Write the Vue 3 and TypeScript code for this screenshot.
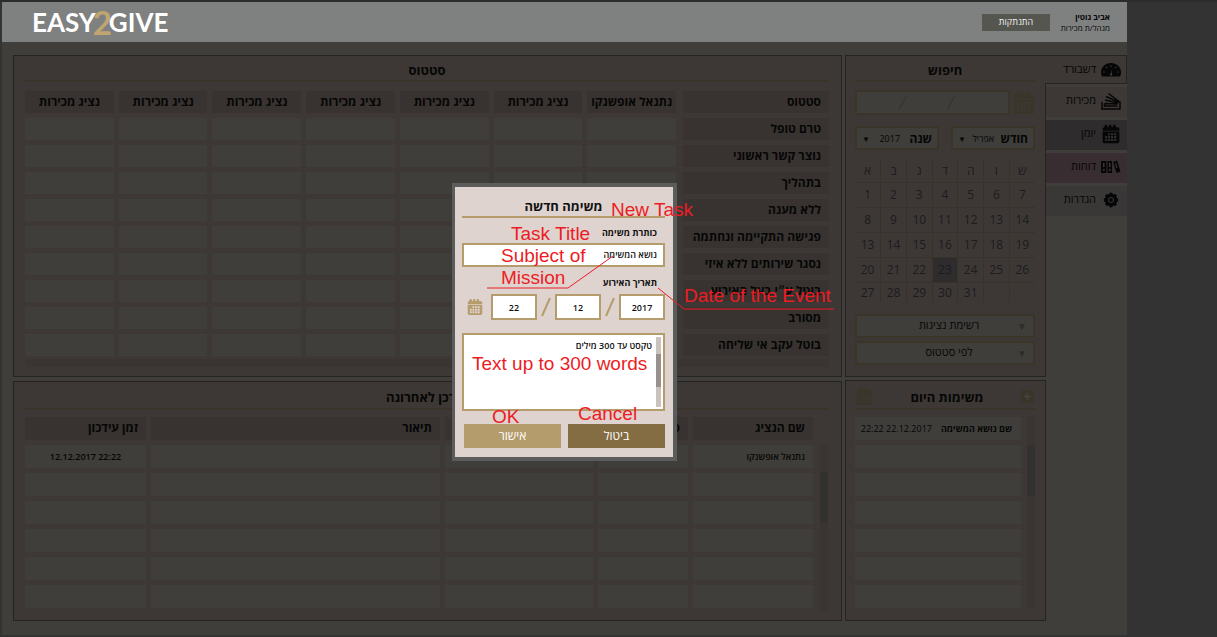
<script setup lang="ts">
import { ref } from 'vue'

const agents = ['נתנאל אופשנקו', 'נציג מכירות', 'נציג מכירות', 'נציג מכירות', 'נציג מכירות', 'נציג מכירות', 'נציג מכירות']
const statuses = [
  'טרם טופל', 'נוצר קשר ראשוני', 'בתהליך', 'ללא מענה', 'פגישה התקיימה ונחתמה',
  'נסגר שירותים ללא איזי', 'בוטל ע״י בעל האירוע', 'מסורב', 'בוטל עקב אי שליחה',
]
const updates = [['נתנאל אופשנקו', '', '', '', '12.12.2017 22:22'], ...Array.from({ length: 5 }, () => ['', '', '', '', ''])]
const weekDays = ['א', 'ב', 'ג', 'ד', 'ה', 'ו', 'ש']
const weeks = [
  ['1', '2', '3', '4', '5', '6', '7'],
  ['8', '9', '10', '11', '12', '13', '14'],
  ['13', '14', '15', '16', '17', '18', '19'],
  ['20', '21', '22', '23', '24', '25', '26'],
  ['27', '28', '29', '30', '31', '', ''],
]
const nav = [
  { id: 'dash', label: 'דשבורד' },
  { id: 'sales', label: 'מכירות' },
  { id: 'diary', label: 'יומן' },
  { id: 'reports', label: 'דוחות' },
  { id: 'settings', label: 'הגדרות' },
]
const petals = [0, 45, 90, 135, 180, 225, 270, 315]
const subject = ref('נושא המשימה')
const year = ref('2017')
const month = ref('12')
const day = ref('22')
const body = ref('טקסט עד 300 מילים')
</script>

<template>
  <div class="screen" dir="rtl">
    <svg class="defs" width="0" height="0" aria-hidden="true">
      <symbol id="cal" viewBox="0 0 22 24">
        <path d="M1 8V6q0-2 2-2l1-3h2l1 3h1l1-3h2l1 3h1l1-3h2l1 3h2q2 0 2 2v2z" />
        <path fill-rule="evenodd" d="M1 9h20v12q0 2-2 2H3q-2 0-2-2zM7.500 11v2.500h2.500V11zM11 11v2.500h2.500V11zM14.500 11v2.500h3V11zM4 14.500v2.500h2.500v-2.500zM7.500 14.500v2.500h2.500v-2.500zM11 14.500v2.500h2.500v-2.500zM14.500 14.500v2.500h3v-2.500zM4 18v2.500h2.500V18zM7.500 18v2.500h2.500V18zM11 18v2.500h2.500V18zM14.500 18v2.500h3V18z" />
      </symbol>
    </svg>
    <div class="app">
      <header class="top">
        <div class="user"><b>אביב גוטין</b><span>מנהל/ת מכירות</span></div>
        <button class="logout" type="button">התנתקות</button>
        <div class="logo" dir="ltr">EASY<span>2</span>GIVE</div>
      </header>

      <div class="content">
        <nav class="nav">
          <a v-for="n in nav" :key="n.id" href="#" :class="n.id">
            <svg v-if="n.id === 'dash'" viewBox="0 0 20 16" width="20" height="16">
              <path d="M1 14.500Q0 12.500 0 10.500C0 5 4.500 1 10 1s10 4 10 9.500q0 2-1 4z" />
              <g class="hole"><circle cx="10" cy="4" r=".8" /><circle cx="5.500" cy="5.500" r=".8" /><circle cx="14.500" cy="5.500" r=".8" /><circle cx="3" cy="10" r=".8" /><circle cx="17" cy="10" r=".8" /><path d="M11.300 7l-.6 4.500a1.200 1.200 0 1 1-1-.2z" /></g>
            </svg>
            <svg v-else-if="n.id === 'sales'" class="line" viewBox="0 0 20 18" width="20" height="18">
              <path d="M1 10v7h18v-7h-1.500M3.500 11.500V14h13M3.500 11.500l13 .5M4 8l13 3M5 4.500L17.500 10M7.500 1.500l10.500 8" />
            </svg>
            <svg v-else-if="n.id === 'diary'" width="18" height="20"><use href="#cal" /></svg>
            <svg v-else-if="n.id === 'reports'" viewBox="0 0 20 14" width="20" height="14">
              <path d="M0 1h5.500v12H0zM6.500 1H11v12H6.500zM12 2l4-1.500 3.500 11-4 1.500z" />
              <g class="hole"><path d="M2 3h1.500v4H2zM8 3h1.500v4H8z" /><circle cx="2.800" cy="10" r="1" /><circle cx="8.800" cy="10" r="1" /><path d="M14 3.500l1-.4 1.500 5-1 .3z" /></g>
            </svg>
            <svg v-else viewBox="0 0 16 16" width="16" height="16">
              <circle cx="8" cy="8" r="6" />
              <circle v-for="p in petals" :key="p" cx="8" cy="2.500" r="1.900" :transform="`rotate(${p} 8 8)`" />
              <circle class="ring" cx="8" cy="8" r="2.500" />
            </svg>
            <span>{{ n.label }}</span>
          </a>
        </nav>

        <div class="side">
          <section class="panel search">
            <h2>חיפוש</h2>
            <div class="date-row">
              <svg class="gold" width="22" height="24"><use href="#cal" /></svg>
              <div class="date-box"><i>/</i><i>/</i></div>
            </div>
            <div class="picks">
              <button type="button"><b>חודש</b><span>אפריל</span><small>▼</small></button>
              <button type="button"><b>שנה</b><span>2017</span><small>▼</small></button>
            </div>
            <table class="calendar" dir="ltr">
              <thead><tr><th v-for="d in weekDays" :key="d">{{ d }}</th></tr></thead>
              <tbody>
                <tr v-for="(w, i) in weeks" :key="i"><td v-for="(d, j) in w" :key="j" :class="{ today: d === '23' }">{{ d }}</td></tr>
              </tbody>
            </table>
            <button class="drop" type="button"><small>▼</small><span>רשימת נציגות</span></button>
            <button class="drop" type="button"><small>▼</small><span>לפי סטטוס</span></button>
          </section>
          <section class="panel tasks">
            <div class="tasks-head">
              <button class="plus" type="button" aria-label="הוספה"><svg viewBox="0 0 13 13" width="13" height="13"><path d="M6.500 3v7M3 6.500h7" /></svg></button>
              <h2>משימות היום</h2>
              <svg class="gold" width="17" height="19"><use href="#cal" /></svg>
            </div>
            <div class="scroller">
              <div class="track"><div class="thumb"></div></div>
              <ul>
                <li><b>שם נושא המשימה</b><span dir="ltr">22:22 22.12.2017</span></li>
                <li v-for="k in 6" :key="k"></li>
              </ul>
            </div>
          </section>
        </div>

        <main class="main">
          <section class="panel status">
            <h2>סטטוס</h2>
            <table class="grid">
              <thead><tr><th class="label">סטטוס</th><th v-for="(a, i) in agents" :key="i">{{ a }}</th></tr></thead>
              <tbody>
                <tr v-for="s in statuses" :key="s"><th class="label">{{ s }}</th><td v-for="(a, i) in agents" :key="i"></td></tr>
              </tbody>
            </table>
            <div class="strip"></div>
          </section>
          <section class="panel recent">
            <h2>עודכן לאחרונה</h2>
            <div class="scroller">
              <div class="track"><div class="thumb"></div></div>
              <table class="grid log">
                <colgroup><col class="c-name"><col class="c-status"><col class="c-client"><col class="c-text"><col class="c-time"></colgroup>
                <thead><tr><th>שם הנציג</th><th>סטטוס</th><th></th><th>תיאור</th><th>זמן עידכון</th></tr></thead>
                <tbody>
                  <tr v-for="(r, i) in updates" :key="i"><td v-for="(c, j) in r" :key="j"><bdi dir="auto">{{ c }}</bdi></td></tr>
                </tbody>
              </table>
            </div>
          </section>
        </main>
      </div>

      <div class="overlay">
        <form class="modal" @submit.prevent>
          <h2>משימה חדשה</h2>
          <label for="subject">כותרת משימה</label>
          <input id="subject" v-model="subject" class="field" type="text">
          <label for="year">תאריך האירוע</label>
          <div class="date">
            <input id="year" v-model="year" class="field" type="text">
            <svg class="slash" viewBox="0 0 18 22" width="18" height="22"><path d="M5 20L13 2" /></svg>
            <input v-model="month" class="field" type="text" aria-label="חודש">
            <svg class="slash" viewBox="0 0 18 22" width="18" height="22"><path d="M5 20L13 2" /></svg>
            <input v-model="day" class="field" type="text" aria-label="יום">
            <svg class="cal" width="16" height="18"><use href="#cal" /></svg>
          </div>
          <div class="text-wrap field">
            <div class="m-track"><div class="m-thumb"></div></div>
            <textarea v-model="body" aria-label="תוכן המשימה"></textarea>
          </div>
          <div class="actions">
            <button class="cancel" type="button">ביטול</button>
            <button class="ok" type="submit">אישור</button>
          </div>

          <div class="notes" dir="ltr">
            <svg class="leaders" viewBox="0 0 390 280" width="390" height="280"><path d="M32 101H113L158 69M203 101L229 122H379" /></svg>
            <span class="n-new">New Task</span>
            <span class="n-title">Task Title</span>
            <span class="n-subject">Subject of<br>Mission</span>
            <span class="n-date">Date of the Event</span>
            <span class="n-text">Text up to 300 words</span>
            <span class="n-ok">OK</span>
            <span class="n-cancel">Cancel</span>
          </div>
        </form>
      </div>
    </div>
  </div>
</template>

<style>
body { background: #333333; }
</style>

<style scoped>
* { box-sizing: border-box; }
.screen { min-height: 100vh; padding: 2px 90px 2px 2px; background: #333333; font-family: "Open Sans", "Noto Sans", sans-serif; font-size: 11px; color: #060606; overflow: hidden; box-shadow: inset 0 2px #2b2b2b; }
.defs { position: absolute; }
h2, ul { margin: 0; padding: 0; }
button, input, textarea { font: inherit; color: inherit; border-radius: 0; margin: 0; }
svg { flex: none; display: block; fill: currentColor; }
.app { position: relative; min-height: calc(100vh - 4px); background: #3f3e3b; }
.top { height: 40px; display: flex; align-items: center; background: #7f8180; padding: 0 17px 0 30px; }
.user { display: flex; flex-direction: column; font-size: 8px; line-height: 11px; width: 50px; white-space: nowrap; }
.logout { width: 68px; height: 17px; margin-right: 10px; border: 0; padding: 0; background: #565650; color: #f0f0f0; font-size: 9px; line-height: 16px; }
.logo { margin-right: auto; display: flex; align-items: center; font: bold 26px/36px Lato, sans-serif; color: #fff; }
.logo span { font-size: 33px; color: #c0a570; margin: 0 -3px; }
.content { display: flex; padding: 13px 0 14px 11px; }
.nav { width: 82px; margin-left: -1px; position: relative; display: flex; flex-direction: column; gap: 3px; flex: none; }
.nav a { height: 30px; padding: 0 6px 2px 0; display: flex; align-items: center; gap: 5px; color: #060606; font-size: 11px; text-decoration: none; margin-left: 1px; }
.nav a svg { width: 20px; }
.nav a span { line-height: 14px; padding-bottom: 2px; }
.nav .dash { height: 29px; background: #3d3835; border: 1px solid #252422; border-left: 0; margin-left: 0; padding: 1px 5px 0 0; }
.nav .sales { background: #3d3835; }
.nav .diary { background: #2e2c2d; }
.nav .reports { background: #382d30; }
.nav .settings { background: #3a3737; }
.hole { fill: #3d3835; }
.ring { fill: none; stroke: #3a3737; }
.line { fill: none; stroke: currentColor; stroke-width: 1.500; }
.side { width: 201px; flex: none; display: flex; flex-direction: column; gap: 3px; }
.main { flex: 1; min-width: 0; margin-right: 3px; display: flex; flex-direction: column; gap: 4px; }
.panel { background: #3d3835; border: 1px solid #252422; }
h2 { font-size: 13px; font-weight: bold; text-align: center; }
.panel h2 { line-height: 24px; border-bottom: 2px solid #393329; }
.status { height: 322px; padding: 0 12px 0 11px; }
.status h2, .search h2 { padding-top: 2px; height: 26px; }
.recent { height: 240px; padding: 3px 12px 0 11px; }
.recent h2 { height: 25px; }
.grid { table-layout: fixed; border-collapse: separate; border-spacing: 5px; width: calc(100% + 10px); margin: 4px -5px 0; }
.grid th, .grid td { height: 22px; padding: 0; background: #3f3e3b; font-size: 12px; line-height: 18px; white-space: nowrap; }
.grid th { background: #383330; }
.grid .label { width: 148px; text-align: right; padding-right: 8px; border-left: 2px solid transparent; background-clip: padding-box; }
.strip { height: 8px; background: #3a3533; margin: -2px 0 0; }
.scroller { display: flex; }
.track { width: 8px; background: #3a3533; flex: none; }
.thumb { height: 51px; background: #32312f; }
.log { flex: 1; margin: 2px 2px 0 -5px; width: auto; }
.log th, .log td { height: 23px; padding: 0 8px 2px 0; text-align: right; }
.log td { font-size: 9px; font-weight: 600; padding-bottom: 0; }
.log td:last-child { text-align: center; padding: 0; }
.c-name { width: 120px; } .c-status { width: 90px; } .c-client { width: 148px; } .c-time { width: 121px; }
.recent .track { margin: 35px 1px 0 0; }
.recent .thumb { margin-top: 27px; }
.search { height: 322px; padding: 0 10px 0 9px; }
.gold { color: #393529; }
.date-row { display: flex; justify-content: space-between; align-items: center; margin-top: 8px; }
.date-box { width: 155px; height: 25px; border: 2px solid #393529; background: #3f3e3b; display: flex; justify-content: center; gap: 42px; padding-right: 12px; color: #393529; font-size: 18px; line-height: 20px; }
.picks { display: flex; justify-content: space-between; margin-top: 11px; }
.picks button { width: 84px; height: 24px; display: flex; align-items: center; justify-content: space-between; border: 2px solid #393529; background: #3f3e3b; padding: 0 5px; }
.picks b { font-size: 12px; }
.picks span { font-size: 9px; }
small { font-size: 8px; }
.calendar { width: 100%; margin-top: 10px; border-collapse: collapse; table-layout: fixed; font-size: 12px; color: #1c1b1f; text-align: center; }
.calendar th, .calendar td { height: 25px; padding: 0; line-height: 16px; border-left: 1px solid #37322a; border-top: 1px solid #37322a; font-weight: normal; }
.calendar th:first-child, .calendar td:first-child { border-left: 0; }
.calendar thead tr th { height: 22px; border-top: 0; }
.calendar tr:last-child td { height: 21px; }
.calendar .today { background: #2e2c2d; }
.drop { width: 100%; height: 24px; margin-top: 11px; padding: 0 6px; border: 2px solid #393529; background: #3f3e3b; display: flex; align-items: center; font-size: 11px; line-height: 18px; }
.drop + .drop { margin-top: 3px; }
.drop span { flex: 1; text-align: center; padding: 0 0 2px 18px; }
.drop small { color: #302d27; font-size: 10px; }
.tasks { height: 241px; padding: 4px 10px 0 9px; }
.tasks-head { display: flex; align-items: center; justify-content: space-between; height: 25px; border-bottom: 2px solid #393329; padding: 0 1px; }
.tasks h2 { border: 0; line-height: 22px; }
.plus { border: 0; padding: 0; background: #393529; border-radius: 3px; height: 13px; }
.plus svg { stroke: #45413a; stroke-width: 2; }
.tasks .scroller { margin-top: 7px; gap: 6px; }
.tasks ul { flex: 1; list-style: none; display: flex; flex-direction: column; gap: 5px; }
.tasks li { height: 23px; background: #3f3e3b; display: flex; align-items: center; gap: 9px; padding-right: 9px; font-size: 9px; white-space: nowrap; }
.tasks .thumb { margin-top: 28px; }
.overlay { position: absolute; inset: 0; display: flex; justify-content: center; align-items: flex-start; padding-top: 181px; }
.modal { position: relative; width: 225px; border: 4px solid #5c5c5c; border-left-width: 3px; background: #dfd3cf; padding: 7px 8px 9px 7px; color: #111; }
.modal h2 { line-height: 24px; height: 24px; border-bottom: 2px solid #b59c6c; }
.modal label { display: block; font-size: 9px; font-weight: bold; line-height: 12px; margin: 9px 8px 4px 0; }
.modal .field + label { margin-top: 10px; margin-bottom: 5px; }
.field { border: 2px solid #b59c6c; background: #fff; }
input.field { display: block; width: 100%; height: 24px; padding: 0 6px 1px; font-size: 9px; font-weight: 600; outline: 0; }
.date { display: flex; align-items: center; }
.date input.field { width: 46px; height: 26px; text-align: center; padding: 0; }
.slash { fill: none; stroke: #b59c6c; stroke-width: 2; }
.cal { color: #b59c6c; margin-right: 8px; }
.text-wrap { height: 78px; margin-top: 13px; padding: 2px; display: flex; }
.text-wrap textarea { flex: 1; min-width: 0; border: 0; padding: 2px 4px; resize: none; outline: 0; font-size: 9px; line-height: 14px; font-weight: 600; overflow: hidden; background: transparent; }
.m-track { width: 5px; background: #cbc2be; }
.m-thumb { height: 33px; margin-top: 17px; background: #97908d; }
.actions { display: flex; gap: 7px; margin-top: 13px; padding-left: 2px; }
.actions button { flex: 1; height: 24px; border: 0; padding: 0; color: #fff; font-size: 12px; line-height: 22px; }
.cancel { background: #846c43; }
.ok { background: #b59c6c; }
.notes { position: absolute; left: 0; top: 0; font: 19px/22px "Liberation Sans", Arial, sans-serif; color: #ed1c24; pointer-events: none; }
.notes span { position: absolute; white-space: nowrap; }
.leaders { position: absolute; left: 0; top: 0; fill: none; stroke: #ed1c24; stroke-width: 1; }
.n-new { left: 156px; top: 12px; }
.n-title { left: 56px; top: 36px; }
.n-subject { left: 46px; top: 58px; }
.n-date { left: 229px; top: 98px; }
.n-text { left: 17px; top: 166px; }
.n-ok { left: 37px; top: 219px; }
.n-cancel { left: 123px; top: 216px; }
</style>
